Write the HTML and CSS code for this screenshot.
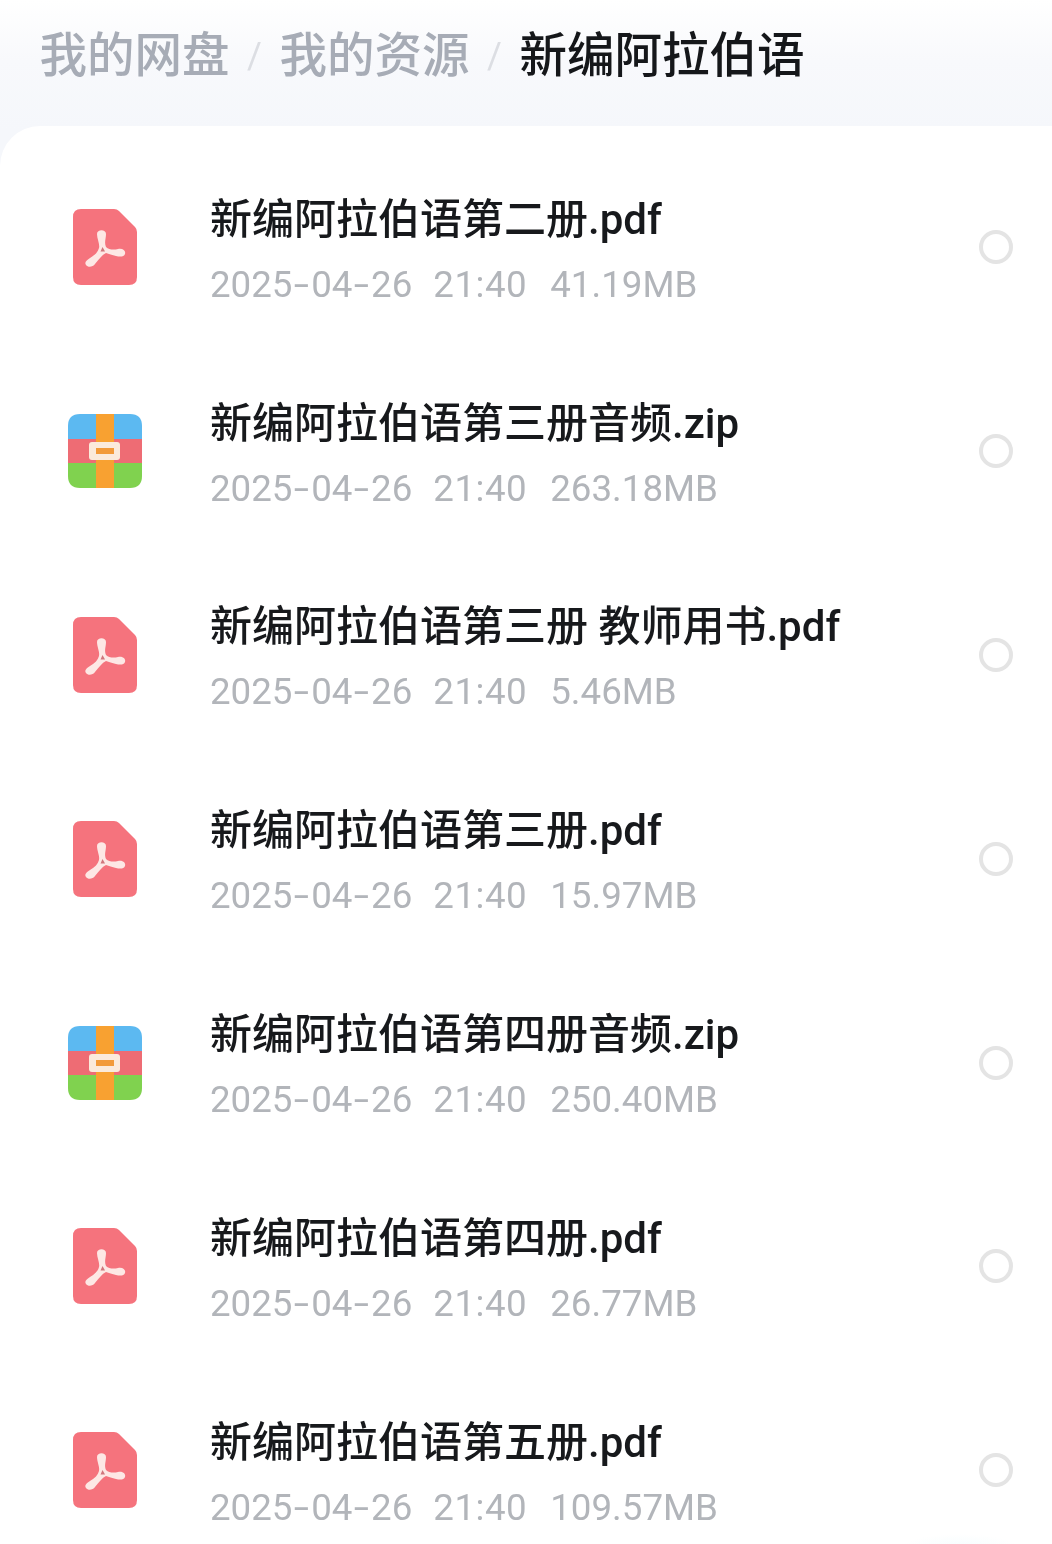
FILE: index.html
```html
<!DOCTYPE html>
<html lang="zh-CN">
<head>
<meta charset="utf-8">
<title>新编阿拉伯语</title>
<link rel="stylesheet" href="styles.css">
</head>
<body>
<svg class="defs" width="0" height="0" aria-hidden="true">
  <symbol id="pdf" viewBox="0 0 64 76">
    <path d="M8 0H41Q44 0 46 2L62 18Q64 20 64 23V68Q64 76 56 76H8Q0 76 0 68V8Q0 0 8 0Z" fill="#f5737d"/>
    <path d="M24 25C24 20 33 20 33 25C33 30 31 33 33 38C36 41 41 41 45 40C50 39 53 42 52 45C51 48 47 48 43 47C39 46 36 45 33 44C29 46 26 50 22 55C20 58 15 59 13 56C11 53 14 51 17 49C22 46 25 43 26 39C27 35 24 30 24 25Z" fill="#fde8e5"/>
    <path d="M29.500 38L32 42.500H27.500Z" fill="#d0767c"/>
  </symbol>
  <symbol id="zip" viewBox="0 0 74 74">
    <path d="M12 0H62Q74 0 74 12V25H0V12Q0 0 12 0Z" fill="#5cb9f1"/>
    <rect y="25" width="74" height="24" fill="#ee6c74"/>
    <path d="M0 49H74V62Q74 74 62 74H12Q0 74 0 62Z" fill="#80d24f"/>
    <rect x="28" width="18" height="74" fill="#f8a131"/>
    <rect x="21" y="28" width="31" height="18" rx="3" fill="#fbeadb"/>
    <rect x="28" y="34" width="18" height="6" fill="#f29a3a"/>
  </symbol>
</svg>
<main class="page">
  <nav class="crumbs">
    <span class="crumb">我的网盘</span><span class="sep">/</span>
    <span class="crumb">我的资源</span><span class="sep">/</span>
    <span class="crumb current">新编阿拉伯语</span>
  </nav>
  <section class="card">
    <article class="row">
      <div class="icon"><svg class="pdf"><use href="#pdf"/></svg></div>
      <div class="info">
        <h2 class="name">新编阿拉伯语第二册.pdf</h2>
        <p class="meta"><span>2025<b class="dash">-</b>04<b class="dash">-</b>26</span><span>21:40</span><span>41.19MB</span></p>
      </div>
      <i class="radio"></i>
    </article>
    <article class="row">
      <div class="icon"><svg class="zip"><use href="#zip"/></svg></div>
      <div class="info">
        <h2 class="name">新编阿拉伯语第三册音频.zip</h2>
        <p class="meta"><span>2025<b class="dash">-</b>04<b class="dash">-</b>26</span><span>21:40</span><span>263.18MB</span></p>
      </div>
      <i class="radio"></i>
    </article>
    <article class="row">
      <div class="icon"><svg class="pdf"><use href="#pdf"/></svg></div>
      <div class="info">
        <h2 class="name">新编阿拉伯语第三册 教师用书.pdf</h2>
        <p class="meta"><span>2025<b class="dash">-</b>04<b class="dash">-</b>26</span><span>21:40</span><span>5.46MB</span></p>
      </div>
      <i class="radio"></i>
    </article>
    <article class="row">
      <div class="icon"><svg class="pdf"><use href="#pdf"/></svg></div>
      <div class="info">
        <h2 class="name">新编阿拉伯语第三册.pdf</h2>
        <p class="meta"><span>2025<b class="dash">-</b>04<b class="dash">-</b>26</span><span>21:40</span><span>15.97MB</span></p>
      </div>
      <i class="radio"></i>
    </article>
    <article class="row">
      <div class="icon"><svg class="zip"><use href="#zip"/></svg></div>
      <div class="info">
        <h2 class="name">新编阿拉伯语第四册音频.zip</h2>
        <p class="meta"><span>2025<b class="dash">-</b>04<b class="dash">-</b>26</span><span>21:40</span><span>250.40MB</span></p>
      </div>
      <i class="radio"></i>
    </article>
    <article class="row">
      <div class="icon"><svg class="pdf"><use href="#pdf"/></svg></div>
      <div class="info">
        <h2 class="name">新编阿拉伯语第四册.pdf</h2>
        <p class="meta"><span>2025<b class="dash">-</b>04<b class="dash">-</b>26</span><span>21:40</span><span>26.77MB</span></p>
      </div>
      <i class="radio"></i>
    </article>
    <article class="row">
      <div class="icon"><svg class="pdf"><use href="#pdf"/></svg></div>
      <div class="info">
        <h2 class="name">新编阿拉伯语第五册.pdf</h2>
        <p class="meta"><span>2025<b class="dash">-</b>04<b class="dash">-</b>26</span><span>21:40</span><span>109.57MB</span></p>
      </div>
      <i class="radio"></i>
    </article>
  </section>
</main>
</body>
</html>
```
FILE: styles.css
```css
* { box-sizing: border-box; }
html, body { margin: 0; padding: 0; }
body {
  width: 1052px;
  height: 1544px;
  overflow: hidden;
  background: #fff;
  font-family: Roboto, "Noto Sans CJK SC", sans-serif;
}
.defs { position: absolute; }
.page {
  position: relative;
  height: 1544px;
  overflow: hidden;
  background: linear-gradient(#ffffff 0, #f8f9fc 60px, #f5f7fb 130px);
  filter: blur(0.55px);
}
.page::after {
  content: "";
  position: absolute;
  left: 900px;
  top: 1534px;
  width: 120px;
  height: 30px;
  background: radial-gradient(closest-side, #f5fcfe, #ffffff);
}
.crumbs {
  height: 126px;
  padding: 23px 0 0 39.500px;
  display: flex;
  align-items: flex-start;
  font-size: 47.5px;
  font-weight: 500;
  line-height: 66px;
  color: #a7acb6;
  white-space: nowrap;
}
.sep {
  width: 50px;
  text-align: center;
  color: #dcdee3;
  font-size: 36px;
  font-weight: 400;
}
.current { color: #15171a; }
.card {
  height: 1418px;
  padding-top: 19.300px;
  background: #fff;
  border-radius: 40px 0 0 0;
}
.row {
  height: 203.83px;
  display: flex;
  align-items: center;
}
.icon {
  width: 210px;
  flex: none;
  display: flex;
  justify-content: center;
}
.icon svg { display: block; }
.icon .pdf { width: 64px; height: 76px; }
.icon .zip { width: 74px; height: 74px; }
.info { flex: 1; min-width: 0; padding-top: 8px; }
.name {
  margin: 0;
  font-size: 42px;
  line-height: 50px;
  font-weight: 500;
  color: #17191c;
  white-space: pre;
}
.meta {
  margin: 17px 0 0;
  display: flex;
  gap: 21px;
  font-size: 36.7px;
  line-height: 46px;
  color: #b2b5ba;
}
.meta span:nth-child(2) {
  letter-spacing: 0.5px;
  margin-right: 2px;
}
.dash {
  display: inline-block;
  width: 18.700px;
  text-align: center;
  font-weight: 400;
  transform: scaleX(1.500);
}
.radio {
  width: 34px;
  height: 34px;
  margin-right: 39px;
  flex: none;
  border: 4.5px solid #e4e4e4;
  border-radius: 50%;
}
```
